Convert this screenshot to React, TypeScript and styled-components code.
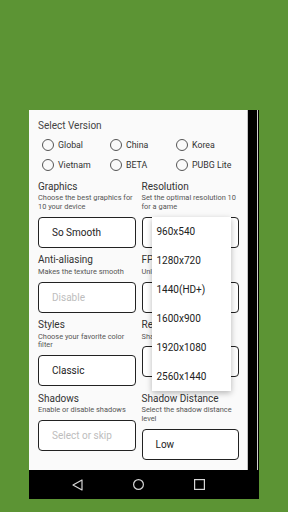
import styled, { createGlobalStyle } from 'styled-components';

const GlobalStyle = createGlobalStyle`
  html, body {
    margin: 0;
    background: #5c9434;
  }
  * {
    box-sizing: border-box;
  }
`;

type Setting = {
  title: string;
  description: string;
  value: string;
  placeholder?: boolean;
  menu?: string[];
};

const versions = ['Global', 'China', 'Korea', 'Vietnam', 'BETA', 'PUBG Lite'];

const resolutions = [
  '960x540',
  '1280x720',
  '1440(HD+)',
  '1600x900',
  '1920x1080',
  '2560x1440',
];

const settings: Setting[] = [
  {
    title: 'Graphics',
    description: 'Choose the best graphics for 10 your device',
    value: 'So Smooth',
  },
  {
    title: 'Resolution',
    description: 'Set the optimal resolution 10 for a game',
    value: '960x540',
    menu: resolutions,
  },
  {
    title: 'Anti-aliasing',
    description: 'Makes the texture smooth',
    value: 'Disable',
    placeholder: true,
  },
  {
    title: 'FPS',
    description: 'Unlock the FPS limit',
    value: '60 FPS',
  },
  {
    title: 'Styles',
    description: 'Choose your favorite color filter',
    value: 'Classic',
  },
  {
    title: 'Rendering',
    description: 'Sharpen the rendering',
    value: 'Default',
  },
  {
    title: 'Shadows',
    description: 'Enable or disable shadows',
    value: 'Select or skip',
    placeholder: true,
  },
  {
    title: 'Shadow Distance',
    description: 'Select the shadow distance level',
    value: 'Low',
  },
];

export default function App() {
  return (
    <Page>
      <GlobalStyle />
      <Device>
        <Screen>
          <Content>
            <Heading>Select Version</Heading>
            <RadioGrid>
              {versions.map((v) => (
                <RadioOption key={v}>
                  <RadioCircle />
                  {v}
                </RadioOption>
              ))}
            </RadioGrid>
            <SettingsGrid>
              {settings.map((s) => (
                <Cell key={s.title}>
                  <Title>{s.title}</Title>
                  <Description>{s.description}</Description>
                  <Select $placeholder={s.placeholder}>
                    {s.value}
                    {s.menu && (
                      <Menu>
                        {s.menu.map((item) => (
                          <MenuItem key={item}>{item}</MenuItem>
                        ))}
                      </Menu>
                    )}
                  </Select>
                </Cell>
              ))}
            </SettingsGrid>
          </Content>
          <NavBar>
            <svg width="11" height="12" viewBox="0 0 11 12">
              <path
                d="M1 6 L10 1 L10 11 Z"
                fill="none"
                stroke="#d6d6d6"
                strokeWidth="1.2"
                strokeLinejoin="round"
              />
            </svg>
            <svg width="11" height="11" viewBox="0 0 11 11">
              <circle
                cx="5.5"
                cy="5.5"
                r="4.9"
                fill="none"
                stroke="#d6d6d6"
                strokeWidth="1.2"
              />
            </svg>
            <svg width="11" height="11" viewBox="0 0 11 11">
              <rect
                x="0.6"
                y="0.6"
                width="9.8"
                height="9.8"
                fill="none"
                stroke="#d6d6d6"
                strokeWidth="1.2"
              />
            </svg>
          </NavBar>
        </Screen>
        <Edge>
          <Rim />
        </Edge>
      </Device>
    </Page>
  );
}

const Page = styled.div`
  height: 512px;
  padding: 110px 0 0 29px;
  font-family: Roboto, 'Liberation Sans', sans-serif;
`;

const Device = styled.div`
  display: flex;
  width: 230px;
`;

const Screen = styled.div`
  display: flex;
  flex-direction: column;
  width: 219px;
`;

const Content = styled.div`
  height: 360px;
  overflow: hidden;
  background: #fafafa;
  border-right: 1px solid #c4c4c4;
  padding: 10px 8px 0 9px;
`;

const Heading = styled.div`
  font-size: 10px;
  line-height: 12px;
  color: #444;
`;

const RadioGrid = styled.div`
  display: grid;
  grid-template-columns: 68px 66px 1fr;
  grid-auto-rows: 20px;
  margin-top: 3px;
  padding-left: 4px;
`;

const RadioOption = styled.div`
  display: flex;
  align-items: center;
  gap: 4px;
  font-size: 8.8px;
  color: #333;
`;

const RadioCircle = styled.span`
  width: 12px;
  height: 12px;
  border-radius: 50%;
  border: 1px solid #555;
  flex-shrink: 0;
`;

const SettingsGrid = styled.div`
  display: grid;
  grid-template-columns: 1fr 1fr;
  gap: 6.7px 6px;
  align-items: start;
  margin-top: 6px;
`;

const Cell = styled.div`
  display: flex;
  flex-direction: column;
`;

const Title = styled.div`
  font-size: 10px;
  line-height: 12px;
  color: #333;
  white-space: nowrap;
`;

const Description = styled.div`
  margin-top: 1.4px;
  font-size: 7.4px;
  line-height: 8.6px;
  color: #555;
`;

const Select = styled.div<{ $placeholder?: boolean }>`
  position: relative;
  display: flex;
  align-items: center;
  height: 31px;
  margin-top: 5.2px;
  padding-left: 13px;
  background: #fff;
  border: 1px solid #222;
  border-radius: 4px;
  font-size: 10px;
  color: ${(p) => (p.$placeholder ? '#bdbdbd' : '#222')};
  white-space: nowrap;
`;

const Menu = styled.div`
  position: absolute;
  top: -1px;
  left: 9px;
  z-index: 2;
  width: 79px;
  background: #fff;
  box-shadow: 0 2px 6px rgba(0, 0, 0, 0.28);
`;

const MenuItem = styled.div`
  display: flex;
  align-items: center;
  height: 29px;
  padding-left: 5px;
  font-size: 10px;
  color: #222;
`;

const NavBar = styled.div`
  display: flex;
  align-items: center;
  justify-content: center;
  gap: 50px;
  height: 29px;
  background: #000;
`;

const Edge = styled.div`
  width: 11px;
  background: #000;
`;

const Rim = styled.div`
  height: 360px;
  margin-right: 1px;
  border-right: 1px solid #d0d0d0;
`;
